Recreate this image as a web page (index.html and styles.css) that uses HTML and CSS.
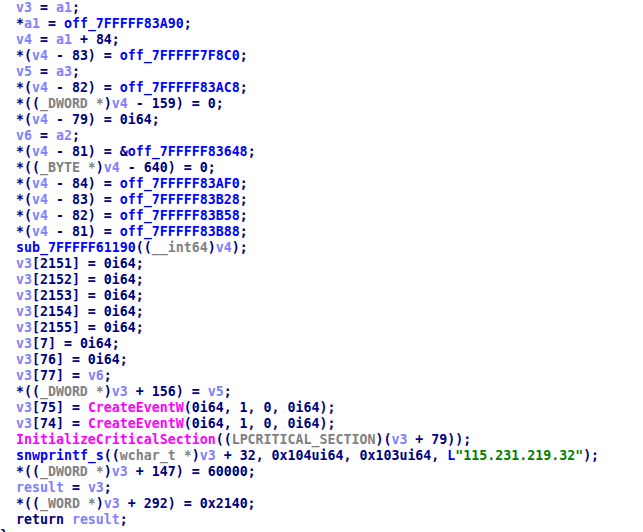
FILE: index.html
```html
<!DOCTYPE html>
<html>
<head>
<meta charset="utf-8">
<link rel="stylesheet" href="styles.css">
</head>
<body>
<div class="code">
<div class="ln">  <span class="v">v3</span> = <span class="v">a1</span>;</div>
<div class="ln">  *<span class="v">a1</span> = <span class="b">off_7FFFFF83A90</span>;</div>
<div class="ln">  <span class="v">v4</span> = <span class="v">a1</span> + 84;</div>
<div class="ln">  *(<span class="v">v4</span> - 83) = <span class="b">off_7FFFFF7F8C0</span>;</div>
<div class="ln">  <span class="v">v5</span> = <span class="v">a3</span>;</div>
<div class="ln">  *(<span class="v">v4</span> - 82) = <span class="b">off_7FFFFF83AC8</span>;</div>
<div class="ln">  *((<span class="g">_DWORD *</span>)<span class="v">v4</span> - 159) = 0;</div>
<div class="ln">  *(<span class="v">v4</span> - 79) = 0i64;</div>
<div class="ln">  <span class="v">v6</span> = <span class="v">a2</span>;</div>
<div class="ln">  *(<span class="v">v4</span> - 81) = &amp;<span class="b">off_7FFFFF83648</span>;</div>
<div class="ln">  *((<span class="g">_BYTE *</span>)<span class="v">v4</span> - 640) = 0;</div>
<div class="ln">  *(<span class="v">v4</span> - 84) = <span class="b">off_7FFFFF83AF0</span>;</div>
<div class="ln">  *(<span class="v">v4</span> - 83) = <span class="b">off_7FFFFF83B28</span>;</div>
<div class="ln">  *(<span class="v">v4</span> - 82) = <span class="b">off_7FFFFF83B58</span>;</div>
<div class="ln">  *(<span class="v">v4</span> - 81) = <span class="b">off_7FFFFF83B88</span>;</div>
<div class="ln">  <span class="b">sub_7FFFFF61190</span>((<span class="g">__int64</span>)<span class="v">v4</span>);</div>
<div class="ln">  <span class="v">v3</span>[2151] = 0i64;</div>
<div class="ln">  <span class="v">v3</span>[2152] = 0i64;</div>
<div class="ln">  <span class="v">v3</span>[2153] = 0i64;</div>
<div class="ln">  <span class="v">v3</span>[2154] = 0i64;</div>
<div class="ln">  <span class="v">v3</span>[2155] = 0i64;</div>
<div class="ln">  <span class="v">v3</span>[7] = 0i64;</div>
<div class="ln">  <span class="v">v3</span>[76] = 0i64;</div>
<div class="ln">  <span class="v">v3</span>[77] = <span class="v">v6</span>;</div>
<div class="ln">  *((<span class="g">_DWORD *</span>)<span class="v">v3</span> + 156) = <span class="v">v5</span>;</div>
<div class="ln">  <span class="v">v3</span>[75] = <span class="m">CreateEventW</span>(0i64, 1, 0, 0i64);</div>
<div class="ln">  <span class="v">v3</span>[74] = <span class="m">CreateEventW</span>(0i64, 1, 0, 0i64);</div>
<div class="ln">  <span class="m">InitializeCriticalSection</span>((<span class="g">LPCRITICAL_SECTION</span>)(<span class="v">v3</span> + 79));</div>
<div class="ln">  <span class="b">snwprintf_s</span>((<span class="g">wchar_t *</span>)<span class="v">v3</span> + 32, 0x104ui64, 0x103ui64, <span class="b">L</span><span class="s">"115.231.219.32"</span>);</div>
<div class="ln">  *((<span class="g">_DWORD *</span>)<span class="v">v3</span> + 147) = 60000;</div>
<div class="ln">  <span class="v">result</span> = <span class="v">v3</span>;</div>
<div class="ln">  *((<span class="g">_WORD *</span>)<span class="v">v3</span> + 292) = 0x2140;</div>
<div class="ln">  return <span class="v">result</span>;</div>
<div class="ln">}</div>
</div>
</body>
</html>
```
FILE: styles.css
```css
html, body {
  margin: 0;
  padding: 0;
  background: #ffffff;
  overflow: hidden;
}
.code {
  display: flex;
  flex-direction: column;
  font-family: "DejaVu Sans Mono", "Liberation Mono", monospace;
  font-weight: bold;
  font-size: 13.28px;
  line-height: 16px;
  color: #000080;
}
.ln {
  height: 16px;
  white-space: pre;
}
.v { color: #8080ff; }
.b { color: #0000ff; }
.m { color: #ff00ff; }
.g { color: #808080; }
.s { color: #008000; }
```
